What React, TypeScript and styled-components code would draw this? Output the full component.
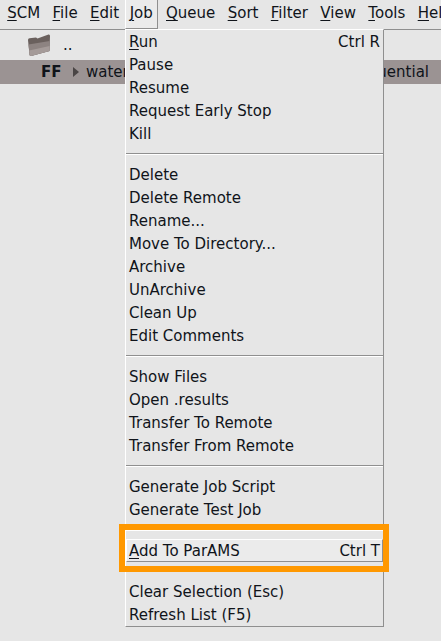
import React from "react";
import styled, { createGlobalStyle } from "styled-components";

const Global = createGlobalStyle`
  html, body { margin: 0; padding: 0; background: #e6e6e6; }
  body { font-family: "DejaVu Sans", sans-serif; font-size: 15px; color: #10141a; }
  #root { width: 441px; height: 641px; overflow: hidden; }
`;

const Page = styled.div`
  position: relative;
  width: 441px;
  height: 641px;
  overflow: hidden;
  background: #e6e6e6;
`;

const MenuBar = styled.div`
  display: flex;
  height: 29px;
  align-items: stretch;
  border-bottom: 1px solid #8f8f8f;
  padding-left: 1px;
  white-space: nowrap;
`;

const MenuTitle = styled.div<{ $open?: boolean }>`
  flex: none;
  padding: 0 6.2px;
  box-sizing: border-box;
  line-height: 26px;
  ${(p) =>
    p.$open
      ? `background:#ebebeb;padding:0 4px 0 4px;margin-left:-0.6px;margin-right:2px;border-left:1px solid #fff;border-right:1px solid #8f8f8f;border-bottom:1px solid #8f8f8f;`
      : ""}
`;

const Mnemonic = styled.span`
  text-decoration: underline;
  text-underline-offset: 2px;
  text-decoration-thickness: 1px;
`;

const List = styled.div`
  padding-top: 3px;
`;

const ParentRow = styled.div`
  display: flex;
  align-items: center;
  height: 27px;
  box-sizing: border-box;
  padding: 0 0 3px 27px;
  gap: 12px;
`;

const JobRow = styled.div`
  display: flex;
  align-items: center;
  height: 24px;
  background: #9b9393;
  white-space: nowrap;
  padding-left: 41px;
`;

const Bold = styled.span`
  font-weight: bold;
  width: 32px;
`;

const RowText = styled.span`
  margin-left: 7px;
`;

const Tail = styled.span`
  margin-left: auto;
  margin-right: 12px;
`;

const Menu = styled.div`
  position: absolute;
  left: 125px;
  top: 29px;
  width: 259px;
  height: 598px;
  box-sizing: border-box;
  background: #e6e6e6;
  border-top: 1px solid #fff;
  border-left: 1px solid #fff;
  border-right: 1px solid #8f8f8f;
  border-bottom: 1px solid #8f8f8f;
  display: flex;
  flex-direction: column;
`;

const Item = styled.div<{ $active?: boolean }>`
  display: flex;
  justify-content: space-between;
  align-items: center;
  height: 23px;
  flex: none;
  box-sizing: border-box;
  padding: 0 3px 0 3px;
  white-space: nowrap;
  ${(p) =>
    p.$active
      ? `background:#ebebeb;border-top:1px solid #fff;border-left:1px solid #fff;border-bottom:1px solid #8f8f8f;border-right:1px solid #8f8f8f;padding:0 2px;`
      : ""}
`;

const Separator = styled.div`
  flex: none;
  height: 2px;
  margin: 8px 0;
  background: linear-gradient(#8f8f8f 50%, #fff 50%);
`;

const Callout = styled.div`
  position: absolute;
  left: 119px;
  top: 524px;
  width: 270px;
  height: 48px;
  box-sizing: border-box;
  border: 6px solid #ff9800;
  pointer-events: none;
`;

const titles: [string, string, boolean?][] = [
  ["S", "CM"],
  ["F", "ile"],
  ["E", "dit"],
  ["J", "ob", true],
  ["Q", "ueue"],
  ["S", "ort"],
  ["F", "ilter"],
  ["V", "iew"],
  ["T", "ools"],
  ["H", "elp"],
];

type Entry = { t: string; m?: string; rest?: string; key?: string; active?: boolean } | "sep";

const entries: Entry[] = [
  { t: "", m: "R", rest: "un", key: "Ctrl R" },
  { t: "Pause" },
  { t: "Resume" },
  { t: "Request Early Stop" },
  { t: "Kill" },
  "sep",
  { t: "Delete" },
  { t: "Delete Remote" },
  { t: "Rename..." },
  { t: "Move To Directory..." },
  { t: "Archive" },
  { t: "UnArchive" },
  { t: "Clean Up" },
  { t: "Edit Comments" },
  "sep",
  { t: "Show Files" },
  { t: "Open .results" },
  { t: "Transfer To Remote" },
  { t: "Transfer From Remote" },
  "sep",
  { t: "Generate Job Script" },
  { t: "Generate Test Job" },
  "sep",
  { t: "", m: "A", rest: "dd To ParAMS", key: "Ctrl T", active: true },
  "sep",
  { t: "Clear Selection (Esc)" },
  { t: "Refresh List (F5)" },
];

const FolderIcon = () => (
  <svg width="24" height="24" viewBox="0 0 24 24">
    <path d="M1 7 Q1 5.5 2.5 5.3 L9 4.5 L10.5 5.5 L21.5 1.5 Q23 1.2 23 3 L22.5 18 L4 23 Q2.5 23 2.5 21.5 Z" fill="#6a605d" />
    <path d="M1.5 11.5 L22.7 8 L22.5 18 L4 23 Q2.8 23 2.6 21.5 Z" fill="#8d8381" />
    <path d="M2.2 17.5 L22.6 13 L22.5 18 L4 23 Q2.8 23 2.6 21.5 Z" fill="#a59b99" />
  </svg>
);

export default function App() {
  return (
    <Page>
      <Global />
      <MenuBar>
        {titles.map(([m, r, open]) => (
          <MenuTitle key={m + r} $open={open}>
            <Mnemonic>{m}</Mnemonic>
            {r}
          </MenuTitle>
        ))}
      </MenuBar>
      <List>
        <ParentRow>
          <FolderIcon />
          <span>..</span>
        </ParentRow>
        <JobRow>
          <Bold>FF</Bold>
          <svg width="6" height="10" viewBox="0 0 6 10">
            <path d="M0 0 L6 5 L0 10 Z" fill="#4a4545" />
          </svg>
          <RowText>water</RowText>
          <Tail>sequential</Tail>
        </JobRow>
      </List>
      <Menu>
        {entries.map((e, i) =>
          e === "sep" ? (
            <Separator key={i} />
          ) : (
            <Item key={i} $active={e.active}>
              <span>
                {e.m && <Mnemonic>{e.m}</Mnemonic>}
                {e.rest}
                {e.t}
              </span>
              {e.key && <span>{e.key}</span>}
            </Item>
          )
        )}
      </Menu>
      <Callout />
    </Page>
  );
}
